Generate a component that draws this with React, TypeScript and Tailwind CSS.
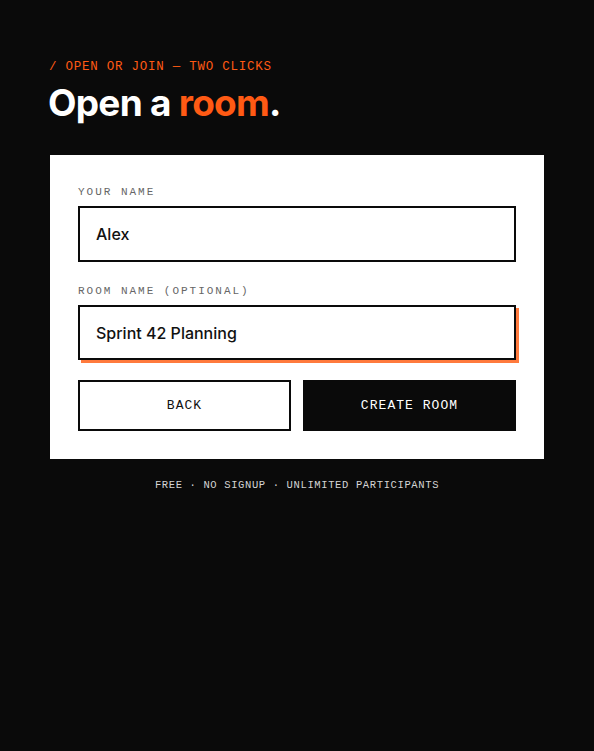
export default function App() {
  return (
    <main className="min-h-screen w-full bg-[#0a0a0a] px-[50px] pt-[59px] font-['Inter','Noto_Sans',sans-serif]">
      <p className="ml-[-1px] font-['Liberation_Mono','DejaVu_Sans_Mono',monospace] text-[12.5px] leading-4 tracking-[0.06em] text-[#ff5a14]">
        / OPEN OR JOIN — TWO CLICKS
      </p>
      <h1 className="ml-[-2px] mt-[5px] text-[37px] font-bold leading-[45px] tracking-[-0.02em] text-white">
        Open a <span className="text-[#ff5a14]">room</span>.
      </h1>

      <div className="mt-[30px] bg-white p-[28px]">
        <label className="block font-['Liberation_Mono','DejaVu_Sans_Mono',monospace] text-[11px] leading-[19px] tracking-[0.18em] text-[#666]">
          YOUR NAME
        </label>
        <div className="mt-1 flex h-[56px] items-center border-2 border-[#0a0a0a] px-4 text-[16px] font-medium text-[#111]">
          Alex
        </div>

        <label className="mt-5 block font-['Liberation_Mono','DejaVu_Sans_Mono',monospace] text-[11px] leading-[19px] tracking-[0.18em] text-[#666]">
          ROOM NAME (OPTIONAL)
        </label>
        <div className="mt-1 flex h-[55px] items-center border-2 border-[#0a0a0a] px-4 text-[16px] font-medium text-[#111] shadow-[3px_3px_0_#ff7a3d]">
          Sprint 42 Planning
        </div>

        <div className="mt-5 grid grid-cols-2 gap-3">
          <button className="h-[51px] border-2 border-[#0a0a0a] bg-white font-['Liberation_Mono','DejaVu_Sans_Mono',monospace] text-[13px] tracking-[0.08em] text-[#111]">
            BACK
          </button>
          <button className="h-[51px] bg-[#0a0a0a] font-['Liberation_Mono','DejaVu_Sans_Mono',monospace] text-[13px] tracking-[0.08em] text-white">
            CREATE ROOM
          </button>
        </div>
      </div>

      <p className="mt-[18px] text-center font-['Liberation_Mono','DejaVu_Sans_Mono',monospace] text-[10.5px] leading-4 tracking-[0.06em] text-[#d4d4d4]">
        FREE · NO SIGNUP · UNLIMITED PARTICIPANTS
      </p>
    </main>
  );
}
